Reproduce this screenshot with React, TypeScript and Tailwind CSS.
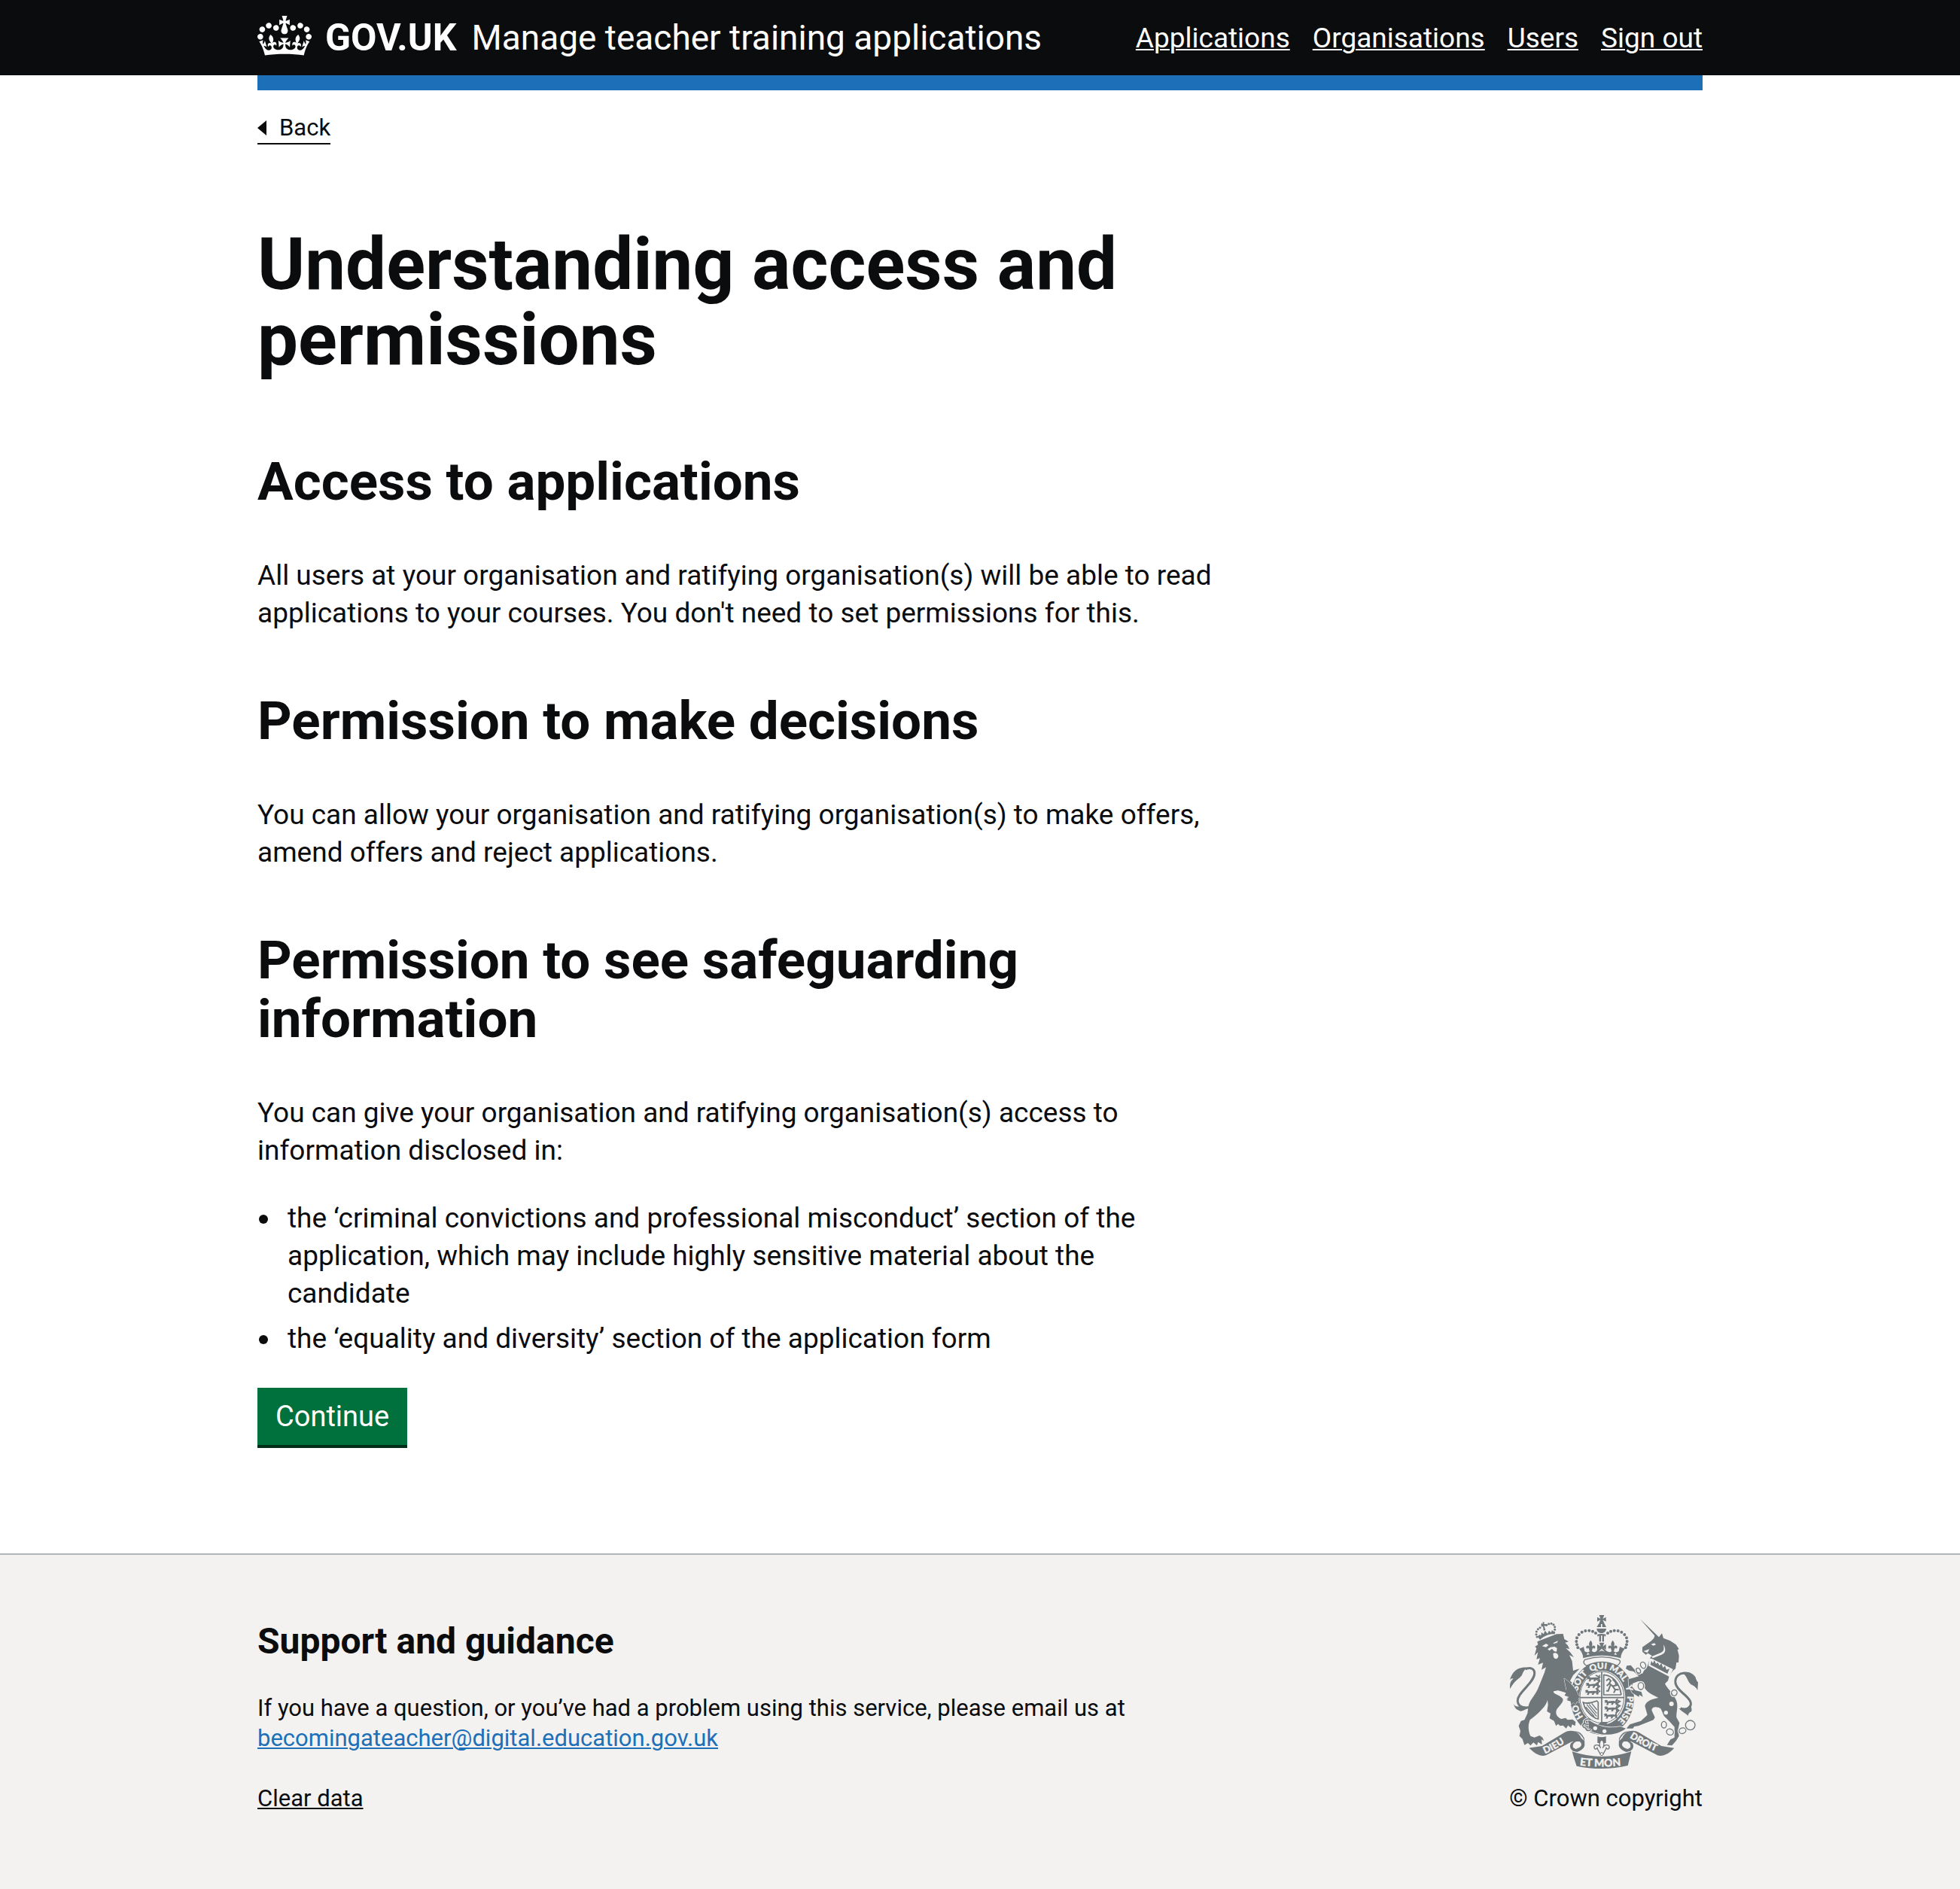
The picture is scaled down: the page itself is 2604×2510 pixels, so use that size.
import React from "react";

const navItems = ["Applications", "Organisations", "Users", "Sign out"];

function Crown() {
  return (
    <svg
      aria-hidden="true"
      viewBox="0 0 132 97"
      className="mb-[5px] h-[53px] w-[72px] shrink-0"
      fill="currentColor"
      fillRule="evenodd"
    >
      <path d="M25 30.2c3.5 1.5 7.7-.2 9.1-3.7 1.5-3.6-.2-7.8-3.9-9.2-3.6-1.4-7.6.3-9.1 3.9-1.4 3.5.3 7.5 3.9 9zM9 39.5c3.6 1.5 7.8-.2 9.2-3.7 1.5-3.6-.2-7.8-3.9-9.1-3.6-1.5-7.6.2-9.1 3.8-1.4 3.5.3 7.5 3.8 9zM4.4 57.2c3.5 1.5 7.7-.2 9.1-3.8 1.5-3.6-.2-7.7-3.9-9.1-3.5-1.5-7.6.3-9.1 3.8-1.4 3.5.3 7.6 3.9 9.1zm38.3-21.4c3.5 1.5 7.7-.2 9.1-3.8 1.5-3.6-.2-7.7-3.9-9.1-3.6-1.5-7.6.3-9.1 3.8-1.3 3.6.4 7.7 3.9 9.1zm64.4-5.6c-3.6 1.5-7.8-.2-9.1-3.7-1.5-3.6.2-7.8 3.8-9.2 3.6-1.4 7.7.3 9.2 3.9 1.3 3.5-.4 7.5-3.9 9zm15.9 9.3c-3.6 1.5-7.7-.2-9.1-3.7-1.5-3.6.2-7.8 3.7-9.1 3.6-1.5 7.7.2 9.2 3.8 1.5 3.5-.3 7.5-3.8 9zm4.7 17.7c-3.6 1.5-7.8-.2-9.2-3.8-1.5-3.6.2-7.7 3.9-9.1 3.6-1.5 7.7.3 9.2 3.8 1.3 3.5-.4 7.6-3.9 9.1zM89.3 35.8c-3.6 1.5-7.8-.2-9.2-3.8-1.4-3.6.2-7.7 3.9-9.1 3.6-1.5 7.7.3 9.2 3.8 1.4 3.6-.3 7.7-3.9 9.1zM69.7 17.7l8.9 4.7V9.3l-8.9 2.8c-.2-.3-.5-.6-.9-.9L72.4 0H59.6l3.5 11.2c-.3.3-.6.5-.9.9l-8.8-2.8v13.1l8.8-4.7c.3.3.6.7.9.9l-5 15.4v.1c-.2.8-.4 1.6-.4 2.4 0 4.1 3.1 7.5 7 8.1h.2c.3 0 .7.1 1 .1.4 0 .7 0 1-.1h.2c4-.6 7.1-4.1 7.1-8.1 0-.8-.1-1.7-.4-2.4V34l-5.1-15.4c.4-.2.7-.6 1-.9zM66 92.8c16.9 0 32.8 1.1 47.1 3.2 4-16.9 8.9-26.7 14-33.5l-9.6-3.4c1 4.9 1.1 7.2 0 10.2-1.5-1.4-3-4.3-4.2-8.7L108.6 76c2.8-2 5-3.2 7.5-3.3-4.4 9.4-10 11.9-13.6 11.2-4.3-.8-6.3-4.6-5.6-7.9 1-4.7 5.7-5.9 8-.5 4.3-8.7-3-11.4-7.6-8.8 7.1-7.2 7.9-13.5 2.1-21.1-8 6.1-8.1 12.3-4.5 20.8-4.7-5.4-12.1-2.5-9.5 6.2 3.4-5.2 7.9-2 7.2 3.1-.6 4.3-6.4 7.8-13.5 7.2-10.3-.9-10.9-8-11.2-13.8 2.5-.5 7.1 1.8 11 7.3L80.2 60c-4.1 4.4-8 5.3-12.3 5.4 1.4-4.4 8-11.6 8-11.6H55.5s6.4 7.2 7.9 11.6c-4.2-.1-8-1-12.3-5.4l1.4 16.4c3.9-5.5 8.5-7.7 10.9-7.3-.3 5.8-.9 12.8-11.1 13.8-7.2.6-12.9-2.9-13.5-7.2-.7-5 3.8-8.3 7.1-3.1 2.7-8.7-4.6-11.6-9.4-6.2 3.7-8.5 3.6-14.7-4.6-20.8-5.8 7.6-5 13.9 2.2 21.1-4.7-2.6-11.9.1-7.7 8.8 2.3-5.5 7.1-4.2 8.1.5.7 3.3-1.3 7.1-5.7 7.9-3.5.7-9-1.8-13.5-11.2 2.5.1 4.7 1.3 7.5 3.3l-4.7-15.4c-1.2 4.4-2.7 7.2-4.3 8.7-1.1-3-.9-5.3 0-10.2l-9.5 3.4c5 6.9 9.9 16.7 14 33.5 14.8-2.1 30.8-3.2 47.7-3.2z" />
    </svg>
  );
}

const INK = "#6f777b";
const PAPER = "#f3f2f1";

const archBeads = [
  [349, 208], [345, 196], [343, 183], [345, 169], [353, 156], [365, 146],
  [379, 141], [394, 140], [408, 143], [420, 150],
];

const smallCrownBeads = [
  [186, 165], [183, 155], [184, 144], [190, 134], [198, 128],
  [224, 118], [233, 113], [243, 112], [252, 116], [257, 125], [257, 136], [254, 147],
];

const chainLinks = [
  [609, 278, 10, 13, -25], [590, 300, 8, 11, -25], [600, 361, 11, 14, 0],
  [692, 515, 10, 13, 0], [716, 544, 14, 12, 20], [766, 539, 14, 11, -20],
  [797, 517, 19, 19, 0], [733, 388, 11, 12, 30],
];

function Passant({ x, y }: { x: number; y: number }) {
  return (
    <path
      transform={`translate(${x} ${y})`}
      fill={INK}
      d="M0 6 L6 2 L13 3 L14 8 L24 7 L38 6 L44 8 L48 0 L52 -4 L56 -2 L52 2 L52 14 L55 20 L47 22 L46 14 L38 15 L34 22 L27 22 L30 15 L18 15 L15 23 L7 22 L11 17 L8 13 L1 15 L4 10 Z"
    />
  );
}

function FleurDeLis({ x, y }: { x: number; y: number }) {
  return (
    <path
      transform={`translate(${x} ${y})`}
      fill={INK}
      d="M0 -28 C7 -20 9 -12 3 -1 C8 -11 19 -9 18 0 C17 6 11 6 10 1 C7 5 6 8 5 14 L-5 14 C-6 8 -7 5 -10 1 C-11 6 -17 6 -18 0 C-19 -9 -8 -11 -3 -1 C-9 -12 -7 -20 0 -28 Z"
    />
  );
}

function RoyalArms() {
  return (
    <svg
      role="img"
      aria-label="Royal coat of arms"
      viewBox="78 78 750 612"
      className="h-[204px] w-[250px]"
      fill={INK}
      fontFamily="Lato, 'Liberation Sans', sans-serif"
      fontWeight={900}
    >
      <defs>
        <path id="garter" d="M446 524 A100 116 0 0 1 446 292 A100 116 0 0 1 446 524" />
        <path id="dieu" d="M218 631 Q266 612 328 566" />
        <path id="etmon" d="M356 677 Q444 688 534 677" />
        <path id="droit" d="M554 566 Q620 608 690 633" />
      </defs>

      {/* lion's tail */}
      <path
        d="M166 441 C142 452 112 448 109 422 C106 388 172 352 176 312 C178 292 160 284 140 294"
        fill="none"
        stroke={INK}
        strokeWidth={9}
      />
      <path d="M152 288 C136 292 130 306 126 318 C114 334 96 338 79 372 C76 354 80 342 92 331 C86 330 82 332 78 336 C86 312 96 300 112 292 C126 286 142 286 152 288 Z" />
      <path d="M122 440 C108 446 98 442 93 433 C98 452 108 458 122 461 C136 460 142 450 160 448 Z" />

      {/* lion */}
      <path d="M187 184 L196 180 L264 154 L290 153 L295 174 L312 184 L298 188 L308 198 L316 213 L301 210 L318 226 L333 246 L315 238 L326 262 L330 300 L340 296 L356 292 L330 318 L318 340 L340 362 L352 380 L350 402 L356 424 L346 434 L342 424 L334 436 L326 428 L318 432 L318 420 L304 414 L310 404 L296 398 L304 388 L288 382 L272 378 L252 382 C248 392 272 394 288 410 C296 424 272 440 264 456 C258 470 266 486 284 492 L300 488 L308 496 L328 494 L340 504 L338 520 L326 514 L322 528 L310 518 L302 530 L290 518 L278 520 L270 512 L262 520 L254 500 L236 490 L240 470 L226 462 L230 436 L228 416 C222 444 190 470 158 496 C150 516 150 536 160 560 L176 566 L196 558 L208 566 L214 580 L204 574 L206 594 L190 584 L186 598 L172 586 L160 598 L150 588 L136 596 L128 572 L116 560 L120 540 L113 520 L122 500 L136 496 L148 470 L152 440 C158 414 180 398 192 366 C204 336 216 312 222 286 L204 296 L210 268 L190 276 L198 250 L184 254 L190 226 L176 240 L184 210 L178 204 L190 196 Z" />
      <g fill={PAPER}>
        <path d="M206 202 L222 192 L232 198 L222 206 Z" />
        <path d="M250 190 L270 180 L266 188 L254 192 Z" />
        <path d="M228 214 L240 206 L256 204 L266 210 L264 224 L254 222 L246 212 L236 220 Z" />
        <path d="M250 232 C256 226 268 228 271 240 C272 252 260 256 254 249 C250 244 252 238 250 232 Z" />
      </g>

      {/* lion's crown */}
      <path d="M188 164 L196 156 L202 160 L204 146 L212 154 L218 140 L228 152 L234 140 L242 148 L246 138 L254 146 L258 154 C236 152 216 160 198 176 Z" />
      <path d="M204 110 L210 113 L208 106 L216 107 L214 114 L222 114 L221 123 L214 120 L220 138 L212 140 L210 122 L205 126 L202 118 Z" />
      {smallCrownBeads.map(([x, y]) => (
        <circle key={`${x}-${y}`} cx={x} cy={y} r={4.5} />
      ))}

      {/* unicorn's tail */}
      <path
        d="M758 450 C790 460 806 440 796 420 C780 392 744 380 738 350 C734 322 756 304 784 312"
        fill="none"
        stroke={INK}
        strokeWidth={9}
      />
      <path d="M764 306 C790 300 810 312 818 326 C820 334 822 340 828 346 L826 378 C816 356 802 362 792 346 C784 334 784 322 764 306 Z" />
      <path d="M752 450 C768 468 784 472 788 480 C790 468 796 464 802 462 C804 450 800 440 796 434 L780 452 Z" />

      {/* garter */}
      <ellipse cx="446" cy="409" rx="132" ry="152" fill={PAPER} />
      <ellipse cx="446" cy="409" rx="127" ry="147" />
      <ellipse cx="446" cy="407" rx="92" ry="108" fill={PAPER} />

      {/* unicorn */}
      <path
        d="M596 93 L672 166 L684 151 L690 170 L716 180 L740 196 L752 214 L746 216 L752 240 L750 268 L742 266 L738 292 L728 300 L714 318 L708 340 L696 352 C706 372 728 390 742 420 C750 444 740 466 742 486 L754 508 L748 536 L752 560 L740 580 L724 598 L704 596 L718 574 L734 566 L734 524 L716 504 L692 480 L680 452 C664 440 640 444 644 460 L656 486 L650 496 L590 520 L574 522 L568 530 L542 530 L556 514 L600 500 L626 476 L616 440 C622 418 650 412 670 408 L640 392 C618 378 608 362 612 346 L590 342 L568 350 L564 362 L578 378 L602 384 L608 404 L594 396 L592 404 L566 388 L552 362 L550 334 L572 328 L592 322 L570 302 L554 300 L540 292 L544 280 L560 278 L582 304 L606 312 L612 300 L626 282 L636 250 L644 240 L628 230 L620 236 L606 224 L606 206 L626 192 L640 182 L652 170 L655 160 L660 166 Z"
        stroke={PAPER}
        strokeWidth={4}
        paintOrder="stroke"
      />
      <g fill={PAPER}>
        <path d="M690 196 C702 214 698 232 682 236 L648 250 L642 244 L680 228 C694 222 692 210 690 196 Z" />
        <path d="M640 194 L654 190 L660 196 L650 200 Z" />
        <path d="M610 222 L634 214 L626 228 Z" />
        <path d="M634 250 L644 252 L728 294 L714 324 L630 280 Z" />
        <circle cx="722" cy="432" r="9" />
        <circle cx="700" cy="467" r="8" />
      </g>
      <path d="M638 276 L642 260 L648 270 L654 258 L660 272 L668 268 L674 280 L682 270 L688 288 L696 280 L702 296 L714 292 L706 312 Z" />
      {chainLinks.map(([x, y, rx, ry, turn]) => (
        <g key={`${x}-${y}`} transform={`rotate(${turn} ${x} ${y})`} fill="none">
          <ellipse cx={x} cy={y} rx={rx + 2} ry={ry + 2} stroke={PAPER} strokeWidth={7} />
          <ellipse cx={x} cy={y} rx={rx} ry={ry} stroke={INK} strokeWidth={4} />
        </g>
      ))}

      {/* garter motto */}
      <g fill={PAPER} stroke={PAPER} strokeWidth={1} fontSize={35}>
        <text>
          <textPath href="#garter" startOffset="13%">HO</textPath>
        </text>
        <text>
          <textPath href="#garter" startOffset="29%">SOIT</textPath>
        </text>
        <text>
          <textPath href="#garter" startOffset="43%">QUI</textPath>
        </text>
        <text>
          <textPath href="#garter" startOffset="54%">MAL</textPath>
        </text>
        <text>
          <textPath href="#garter" startOffset="68%">Y</textPath>
        </text>
        <text>
          <textPath href="#garter" startOffset="74%">PENSE</textPath>
        </text>
      </g>

      {/* lion's forepaw over the garter */}
      <path
        d="M294 330 C318 346 342 370 350 396 L357 404 L350 412 L354 426 L344 424 L340 434 L332 426 L322 434 L320 422 L306 418 L312 404 L300 396 L304 380 Z"
        stroke={PAPER}
        strokeWidth={3}
        paintOrder="stroke"
      />
      <path d="M262 376 L300 376 L318 384 L310 402 L296 398 L302 388 Z" />

      {/* buckle and strap */}
      <path d="M390 494 C430 524 474 532 518 522 L540 530 C500 562 430 562 392 534 Z" stroke={PAPER} strokeWidth={5} paintOrder="stroke" />
      <path
        d="M400 496 C386 486 370 498 376 510 C362 514 370 528 380 528 C382 540 396 542 402 532 M376 512 L392 514"
        fill="none"
        stroke={PAPER}
        strokeWidth={11}
      />
      <path
        d="M400 496 C386 486 370 498 376 510 C362 514 370 528 380 528 C382 540 396 542 402 532 M376 512 L392 514"
        fill="none"
        stroke={INK}
        strokeWidth={5}
      />
      <circle cx="418" cy="529" r="8" fill={PAPER} />
      <circle cx="455" cy="541" r="8" fill={PAPER} />

      {/* shield */}
      <ellipse cx="445" cy="406" rx="88" ry="103" fill="none" stroke={INK} strokeWidth={3} />
      <path d="M444 304 V508 M356 407 H534" stroke={INK} strokeWidth={5} />
      <path d="M452 314 V396 H522 M452 316 C486 318 514 346 522 396" fill="none" stroke={INK} strokeWidth={5} />
      <path
        d="M462 340 L472 332 L480 340 L474 350 L488 362 L498 376 L492 388 M474 352 L464 360 M478 358 L470 380 L462 380 M486 362 L508 356 M496 374 L512 376 M500 356 C504 344 494 342 488 334"
        fill="none"
        stroke={INK}
        strokeWidth={6}
      />
      <Passant x={384} y={320} />
      <Passant x={380} y={346} />
      <Passant x={377} y={374} />
      <Passant x={454} y={414} />
      <Passant x={454} y={440} />
      <Passant x={452} y={468} />
      <path d="M420 318 L436 326 L422 334 L436 342 L422 352 L436 362 L422 372 L436 382 L422 392" fill="none" stroke={INK} strokeWidth={5} />
      <path d="M500 416 L516 422 L502 432 L516 440 L502 450 L512 458 L500 468" fill="none" stroke={INK} strokeWidth={6} />
      <path
        d="M370 426 C390 434 408 426 424 420 L430 426 V492 L420 490 C396 476 376 456 370 426 Z"
        fill="none"
        stroke={INK}
        strokeWidth={5}
      />
      <path d="M384 434 L424 482 M394 434 L424 470 M404 430 L425 456 M380 444 L414 482" stroke={INK} strokeWidth={4} />
      <path d="M430 516 L440 504 L470 504 L460 518 Z" />

      {/* imperial crown */}
      <path d="M439 97 L426 104 V86 L439 93 L434 78 H454 L448 93 L461 86 V104 L448 97 L454 110 L462 126 H446 V114 H441 V126 H424 L434 110 Z" />
      <path d="M424 132 H462 C462 142 454 150 443 150 C432 150 424 142 424 132 Z" />
      <path d="M426 155 C436 152 450 152 461 155 L458 164 L453 160 V184 H446 V160 H441 V184 H434 V160 L428 164 Z" />
      {archBeads.map(([x, y]) => (
        <g key={`${x}-${y}`}>
          <circle cx={x} cy={y} r={6} />
          <circle cx={888 - x} cy={y} r={6} />
        </g>
      ))}
      <path d="M354 212 L366 208 L372 204 L376 222 C386 230 396 226 400 216 C406 226 416 228 424 222 V218 L437 209 L426 216 V194 L440 203 L434 188 H454 L448 203 L461 194 V216 L451 209 L464 222 C474 228 484 226 488 216 C492 226 502 230 512 222 L516 204 L524 208 L536 212 C526 224 520 236 520 250 Q444 228 370 250 C370 236 364 224 354 212 Z" />
      <FleurDeLis x={400} y={207} />
      <FleurDeLis x={488} y={207} />
      <path d="M388 228 l8 7 l-12 2 Z M500 228 l-8 7 l12 2 Z M432 224 L444 212 L456 224 L444 220 Z" fill={PAPER} />
      <path
        d="M376 256 Q444 234 512 256 Q522 262 514 272 L506 280 Q444 250 384 280 Q366 270 376 256 Z"
        fill={PAPER}
        stroke={INK}
        strokeWidth={4}
      />

      {/* motto scroll */}
      <path d="M155 608 L206 600 L296 546 C320 532 352 540 362 568 L374 580 C370 560 350 544 334 542 C354 540 366 552 375 570 L376 596 C374 610 360 618 346 624 L330 620 C318 612 314 600 322 588 C332 578 350 580 350 580 C334 584 326 594 330 606 L340 612 C362 606 370 594 356 582 L326 582 L222 637 C200 644 176 630 155 608 Z" />
      <path d="M733 608 L682 600 L592 546 C568 532 536 540 526 568 L514 580 C518 560 538 544 554 542 C534 540 522 552 513 570 L512 596 C514 610 528 618 542 624 L558 620 C570 612 574 600 566 588 C556 578 538 580 538 580 C554 584 562 594 558 606 L548 612 C526 606 518 594 532 582 L562 582 L666 637 C688 644 712 630 733 608 Z" />
      <path d="M326 622 Q444 662 562 622 L556 646 L548 678 Q496 690 444 690 Q392 690 344 680 L334 650 Z" />
      <g fill={PAPER} stroke={PAPER} strokeWidth={1} fontSize={38}>
        <text>
          <textPath href="#dieu">DIEU</textPath>
        </text>
        <text fontSize={42}>
          <textPath href="#etmon">ET MON</textPath>
        </text>
        <text>
          <textPath href="#droit">DROIT</textPath>
        </text>
      </g>

      {/* badge beneath the shield */}
      <path d="M427 562 Q444 568 461 562 V588 H427 Z" />
      <path
        d="M444 574 C456 584 454 600 448 608 C456 590 476 594 474 606 C472 616 464 612 462 608 C458 622 452 624 450 632 H438 C436 624 430 622 426 608 C424 612 416 616 414 606 C412 594 432 590 440 608 C434 600 432 584 444 574 Z"
        fill={PAPER}
        stroke={INK}
        strokeWidth={4}
      />
      <circle cx="444" cy="632" r="6" fill={PAPER} stroke={INK} strokeWidth={3} />
    </svg>
  );
}

function SectionHeading({ children }: { children: React.ReactNode }) {
  return <h2 className="mb-[61px] text-[71px] leading-[78px] font-bold">{children}</h2>;
}

function Paragraph({ children }: { children: React.ReactNode }) {
  return <p className="text-[37px] leading-[50px]">{children}</p>;
}

function Bullet({ children }: { children: React.ReactNode }) {
  return (
    <li className="flex gap-[26px] pl-[2px] before:mt-[20px] before:size-3 before:shrink-0 before:rounded-full before:bg-[#0b0c0d]">
      <span>{children}</span>
    </li>
  );
}

export default function App() {
  return (
    <div className="bg-white font-['Roboto',sans-serif] text-[#0b0c0d]">
      <header className="bg-[#0b0c0d] px-[60px] text-white">
        <div className="mx-auto flex h-[100px] max-w-[1920px] items-center justify-between">
          <div className="flex items-center">
            <a href="#" className="flex items-center gap-[18px]">
              <Crown />
              <span className="text-[50px] leading-[60px] font-bold">GOV.UK</span>
            </a>
            <a href="#" className="ml-5 text-[46px] leading-[60px]">
              Manage teacher training applications
            </a>
          </div>
          <nav className="flex gap-[30px] pt-[2px] text-[37px] leading-[50px]">
            {navItems.map((item) => (
              <a key={item} href="#" className="underline decoration-2 underline-offset-2">
                {item}
              </a>
            ))}
          </nav>
        </div>
      </header>

      <div className="px-[60px]">
        <div className="mx-auto max-w-[1920px]">
          <div className="h-5 bg-[#1d70b8]" />
          <a
            href="#"
            className="mt-[30px] inline-flex items-center gap-[17px] border-b-2 border-[#0b0c0d] text-[31px] leading-10"
          >
            <svg aria-hidden="true" viewBox="0 0 12 20" className="h-5 w-3">
              <path d="M0 10 12 0v20z" fill="currentColor" />
            </svg>
            Back
          </a>

          <main className="max-w-[1280px] pt-[109px] pb-[140px]">
            <h1 className="mb-[100px] text-[96px] leading-[100px] font-bold">
              Understanding access and permissions
            </h1>

            <section className="mb-[79px]">
              <SectionHeading>Access to applications</SectionHeading>
              <Paragraph>
                All users at your organisation and ratifying organisation(s) will be able to read
                applications to your courses. You don't need to set permissions for this.
              </Paragraph>
            </section>

            <section className="mb-[79px]">
              <SectionHeading>Permission to make decisions</SectionHeading>
              <Paragraph>
                You can allow your organisation and ratifying organisation(s) to make offers, amend
                offers and reject applications.
              </Paragraph>
            </section>

            <section>
              <SectionHeading>Permission to see safeguarding information</SectionHeading>
              <Paragraph>
                You can give your organisation and ratifying organisation(s) access to information
                disclosed in:
              </Paragraph>
              <ul className="my-10 flex flex-col gap-[10px] text-[37px] leading-[50px]">
                <Bullet>
                  the ‘criminal convictions and professional misconduct’ section of the application,
                  which may include highly sensitive material about the candidate
                </Bullet>
                <Bullet>the ‘equality and diversity’ section of the application form</Bullet>
              </ul>
            </section>

            <button
              type="button"
              className="block border-b-4 border-[#002d18] bg-[#00703c] px-6 py-[13px] text-[38px] leading-[50px] text-white"
            >
              Continue
            </button>
          </main>
        </div>
      </div>

      <footer className="border-t-2 border-[#b1b4b6] bg-[#f3f2f1] px-[60px] pt-20 pb-[102px]">
        <div className="mx-auto flex max-w-[1920px] items-end justify-between text-[31px] leading-10">
          <div>
            <h2 className="mb-[35px] text-[48px] leading-[68px] font-bold">Support and guidance</h2>
            <p>
              If you have a question, or you’ve had a problem using this service, please email us at
            </p>
            <p className="mb-10">
              <a
                href="mailto:becomingateacher@digital.education.gov.uk"
                className="text-[#1d70b8] underline decoration-2 underline-offset-2"
              >
                becomingateacher@digital.education.gov.uk
              </a>
            </p>
            <a href="#" className="underline decoration-2 underline-offset-2">
              Clear data
            </a>
          </div>
          <div className="flex w-[262px] flex-col items-center gap-5">
            <RoyalArms />
            <a href="#" className="self-end">
              © Crown copyright
            </a>
          </div>
        </div>
      </footer>
    </div>
  );
}
